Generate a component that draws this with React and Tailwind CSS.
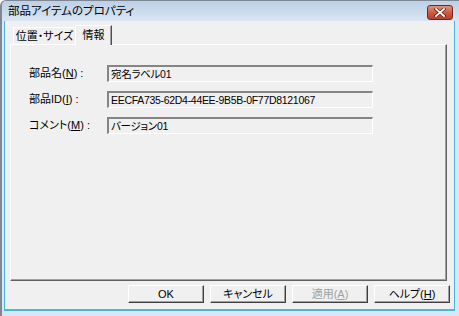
import React from 'react';

const font = "font-['Liberation_Sans','Noto_Sans_CJK_JP',sans-serif] [font-feature-settings:'palt']";

const Field = ({ label, hotkey, suffix, value }) => (
  <div className="flex items-center h-[17px] mb-[9px]">
    <div className="w-[78px] text-[11px] leading-none text-black">
      {label}(<span className="underline">{hotkey}</span>){suffix}
    </div>
    <div className="w-[266px] h-[17px] border-t-2 border-l-2 border-t-[#858585] border-l-[#858585] border-r border-b border-r-white border-b-white bg-[#f0f0f0] flex items-center pl-[2px] text-[10.5px] tracking-[-0.3px] leading-none text-black">
      {value}
    </div>
  </div>
);

const Button = ({ children, disabled }) => (
  <button
    className={`w-[76px] h-[18px] bg-[#f0f0f0] border-t border-l border-t-white border-l-white border-r border-b border-r-[#404040] border-b-[#404040] shadow-[inset_-1px_-1px_0_#a0a0a0] text-[11px] leading-none flex items-center justify-center ${disabled ? 'text-[#a0a0a0]' : 'text-black'}`}
  >
    {children}
  </button>
);

const App = () => {
  return (
    <div className={`w-[459px] h-[316px] overflow-hidden bg-[#dbe6f2] border-t border-l-2 border-[#7d8894] rounded-tl-[6px] flex flex-col ${font}`}>
      {/* title bar */}
      <div className="h-[20px] flex items-center justify-between pl-[6px] pr-[6px] bg-gradient-to-b from-[#bdd0e6] to-[#d9e5f2]">
        <span className="text-[11.5px] leading-none text-black pt-[2px]">部品アイテムのプロパティ</span>
        <div className="w-[26px] h-[15px] mt-[3px] rounded-[3px] border border-[#6e2a1e] bg-gradient-to-b from-[#e0947e] via-[#cc5c44] to-[#b8412c] flex items-center justify-center">
          <svg width="12" height="9" viewBox="0 0 12 9">
            <path d="M2 1 L10 8 M10 1 L2 8" stroke="#5a1a10" strokeWidth="3.2" strokeLinecap="square" />
            <path d="M2 1 L10 8 M10 1 L2 8" stroke="#ffffff" strokeWidth="1.8" strokeLinecap="square" />
          </svg>
        </div>
      </div>

      {/* client */}
      <div className="flex-1 pl-[2px] pr-[4px] pb-[5px]">
        <div className="h-full bg-[#f0f0f0] border-l border-r border-b-2 border-[#49b6dd] flex flex-col">
          {/* tabs */}
          <div className="h-[20px] mt-[3px] pl-[8px] flex items-end">
            <div className="h-[17px] w-[63px] border-t border-l border-white border-r border-r-[#a0a0a0] flex items-center justify-center text-[11px] leading-none text-black">
              位置・サイズ
            </div>
            <div className="h-[20px] w-[37px] -ml-[1px] border-t border-l border-white border-r border-r-[#505050] shadow-[inset_-1px_0_0_#a0a0a0] bg-[#f0f0f0] flex items-center justify-center text-[11px] leading-none text-black relative z-10 -mb-[1px]">
              情報
            </div>
          </div>

          {/* panel */}
          <div className="ml-[5px] w-[437px] h-[237px] border-t border-l border-white border-r border-b border-r-[#606060] border-b-[#606060] shadow-[inset_-1px_-1px_0_#a0a0a0] pt-[20px] pl-[18px]">
            <Field label="部品名" hotkey="N" suffix=" :" value="宛名ラベル01" />
            <Field label="部品ID" hotkey="I" suffix=" :" value="EECFA735-62D4-44EE-9B5B-0F77D8121067" />
            <Field label="コメント" hotkey="M" suffix=" :" value="バージョン01" />
          </div>

          {/* buttons */}
          <div className="flex justify-end gap-[6px] pr-[4px] mt-[4px]">
            <Button>OK</Button>
            <Button>キャンセル</Button>
            <Button disabled>
              適用(<span className="underline">A</span>)
            </Button>
            <Button>
              ヘルプ(<span className="underline">H</span>)
            </Button>
          </div>
        </div>
      </div>
    </div>
  );
};

export default App;
